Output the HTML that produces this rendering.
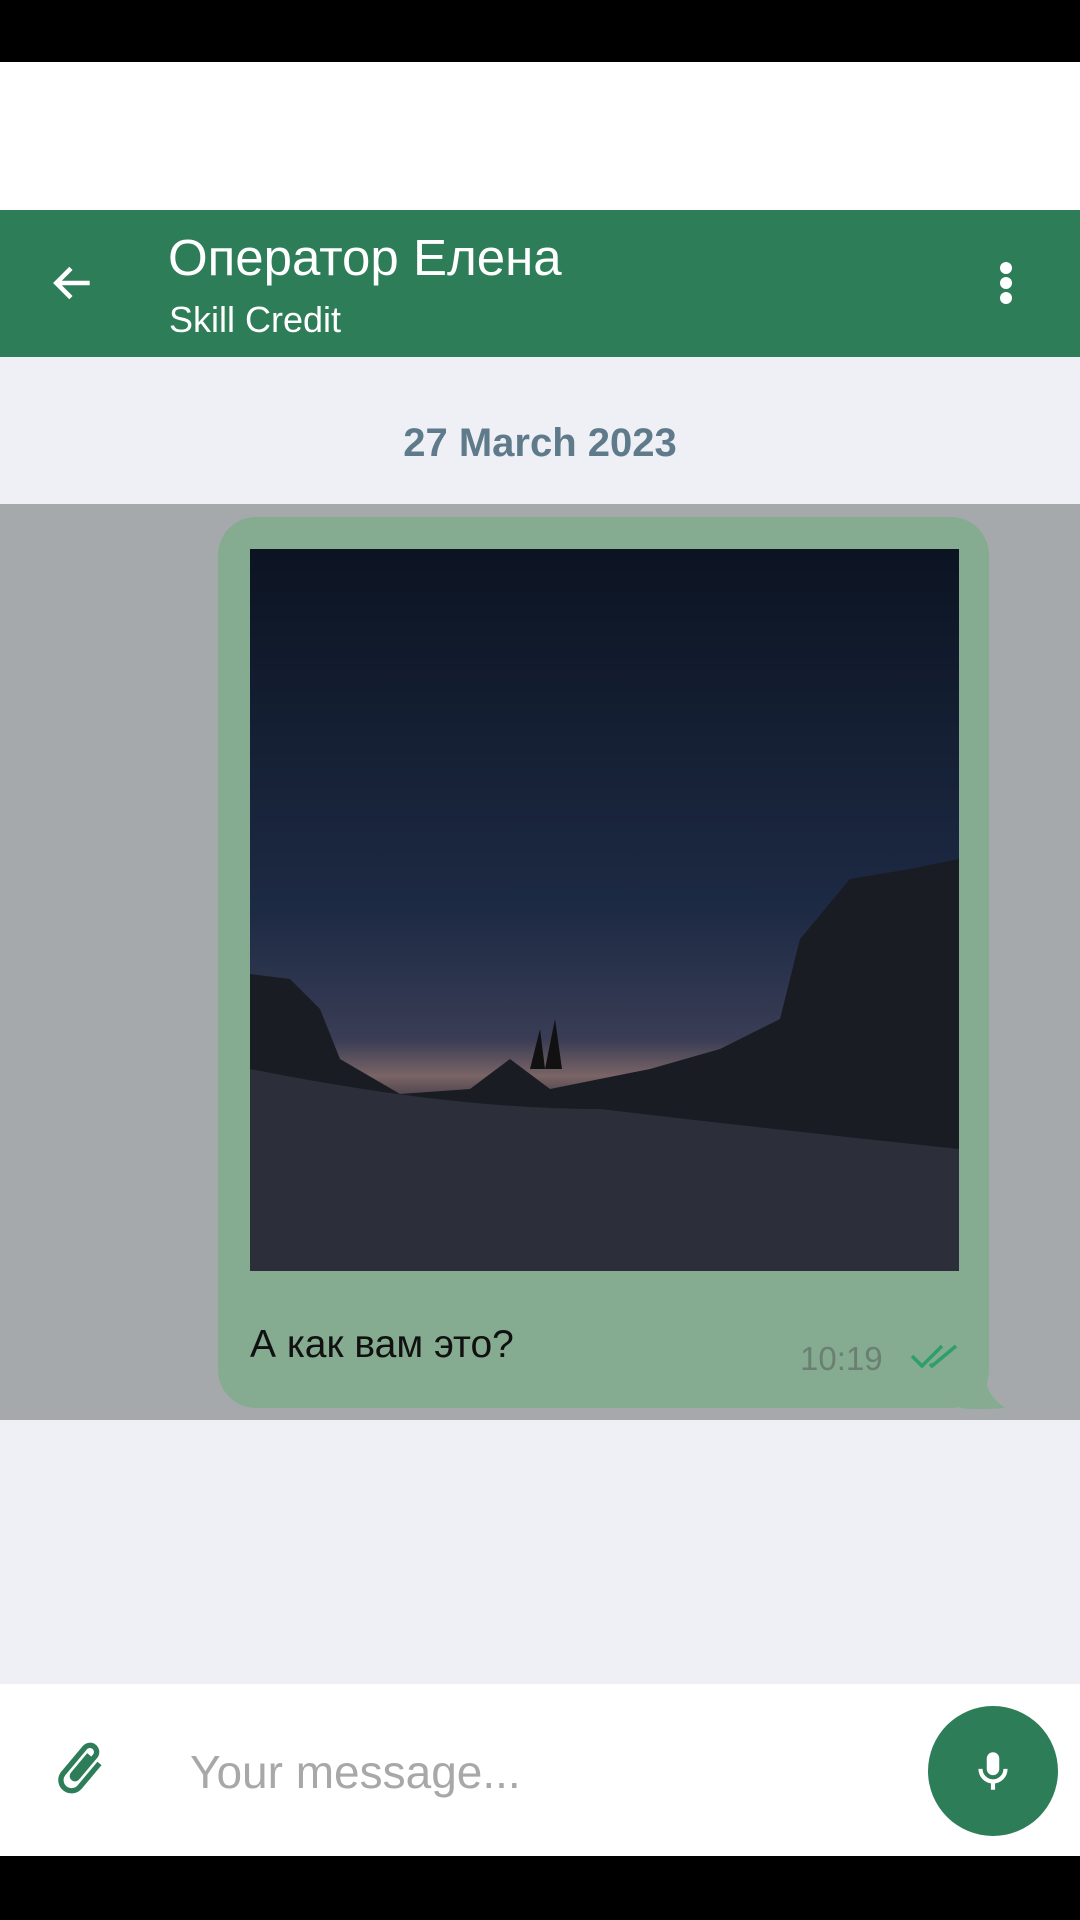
<!DOCTYPE html>
<html><head><meta charset="utf-8"><style>
*{margin:0;padding:0;box-sizing:border-box}
body{width:1080px;height:1920px;position:relative;overflow:hidden;background:#eef0f5;font-family:"Liberation Sans","DejaVu Sans",sans-serif}
.abs{position:absolute}
</style></head><body>
<div class="abs" style="left:0;top:0;width:1080px;height:62px;background:#000"></div>
<div class="abs" style="left:0;top:62px;width:1080px;height:148px;background:#fff"></div>
<div class="abs" style="left:0;top:210px;width:1080px;height:147px;background:#2e7d59"></div>
<svg class="abs" style="left:48px;top:258px" width="50" height="50" viewBox="0 0 24 24"><path d="M20 12H5M11 5l-7 7 7 7" fill="none" stroke="#fff" stroke-width="2.2"/></svg>
<div class="abs" style="left:168px;top:228px;color:#fff;font-size:51px;line-height:60px">Оператор Елена</div>
<div class="abs" style="left:169px;top:299px;color:#fff;font-size:36px;line-height:42px">Skill Credit</div>
<div class="abs" style="left:1000px;top:262px;width:12px;height:12px;border-radius:50%;background:#fff"></div>
<div class="abs" style="left:1000px;top:277px;width:12px;height:12px;border-radius:50%;background:#fff"></div>
<div class="abs" style="left:1000px;top:292px;width:12px;height:12px;border-radius:50%;background:#fff"></div>
<div class="abs" style="left:0;top:421px;width:1080px;text-align:center;color:#5f7a8a;font-size:40px;font-weight:bold">27 March 2023</div>
<div class="abs" style="left:0;top:504px;width:1080px;height:916px;background:#a6a9ac"></div>
<div class="abs" style="left:218px;top:517px;width:771px;height:891px;border-radius:38px;background:#85ab91"></div>
<svg class="abs" style="left:960px;top:1370px" width="45" height="40"><path d="M0 0 L29 0 Q20 20 45 38 Q15 40 0 38Z" fill="#85ab91"/></svg>
<svg class="abs" style="left:250px;top:549px" width="709" height="722" viewBox="0 0 709 722">
<defs><linearGradient id="s" x1="0" y1="0" x2="0" y2="1"><stop offset="0" stop-color="#0c1422"/><stop offset="0.5" stop-color="#1d2a44"/><stop offset="0.68" stop-color="#3a3d55"/><stop offset="0.73" stop-color="#7a6466"/><stop offset="0.78" stop-color="#2a2b38"/><stop offset="1" stop-color="#23232d"/></linearGradient></defs>
<rect width="709" height="722" fill="url(#s)"/>
<path d="M0 425 L40 430 L70 460 L90 510 L150 545 L220 540 L260 510 L300 540 L400 520 L470 500 L530 470 L550 390 L600 330 L660 320 L709 310 L709 722 L0 722Z" fill="#1a1c24"/>
<path d="M0 520 Q200 560 350 560 Q520 580 709 600 L709 722 L0 722Z" fill="#2c2e3a"/>
<path d="M280 520 L290 480 L295 520 L305 470 L312 520Z" fill="#111"/>
</svg>
<div class="abs" style="left:250px;top:1323px;font-size:39px;color:#111">А как вам это?</div>
<div class="abs" style="left:800px;top:1340px;font-size:33px;color:#6b7f73">10:19</div>
<svg class="abs" style="left:910px;top:1342px" width="52" height="30" viewBox="0 0 52 30"><path d="M2 14l10 10L32 4M20 22l2 2L46 4" fill="none" stroke="#2e9e6a" stroke-width="3.5"/></svg>
<div class="abs" style="left:0;top:1684px;width:1080px;height:172px;background:#fff"></div>
<div class="abs" style="left:0;top:1856px;width:1080px;height:64px;background:#000"></div>
<svg class="abs" style="left:48px;top:1734px" width="64" height="68" viewBox="0 0 24 24"><path d="M16.5 6v11.5a4 4 0 0 1-8 0V5a2.5 2.5 0 0 1 5 0v10.5a1 1 0 0 1-2 0V6" fill="none" stroke="#2e7d59" stroke-width="2" transform="rotate(40 12 12)"/></svg>
<div class="abs" style="left:190px;top:1745px;font-size:46px;color:#a8a8a8">Your message...</div>
<div class="abs" style="left:928px;top:1706px;width:130px;height:130px;border-radius:50%;background:#2e7d59"></div>
<svg class="abs" style="left:968px;top:1746px" width="50" height="50" viewBox="0 0 24 24"><rect x="9" y="3" width="6" height="11" rx="3" fill="#fff"/><path d="M6 11a6 6 0 0 0 12 0M12 17v4" fill="none" stroke="#fff" stroke-width="2"/></svg>
</body></html>
